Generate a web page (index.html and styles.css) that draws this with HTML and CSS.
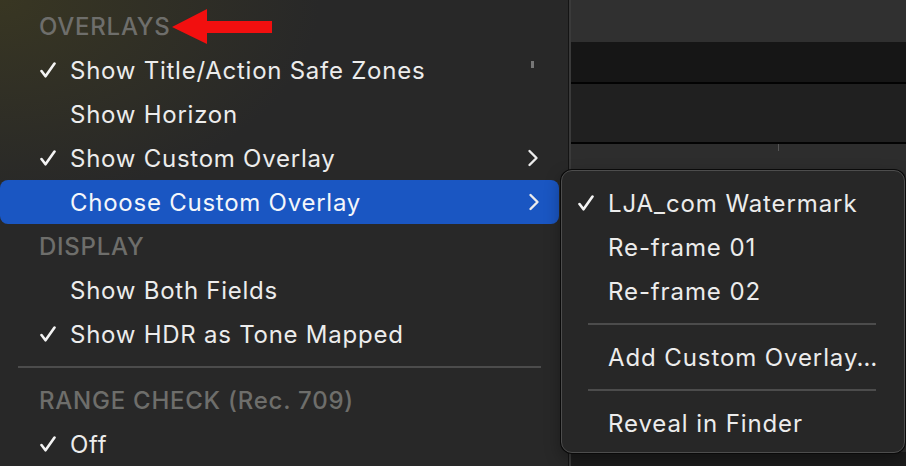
FILE: index.html
```html
<!DOCTYPE html>
<html>
<head>
<meta charset="utf-8">
<link rel="stylesheet" href="styles.css">
</head>
<body>
<div class="screen">
  <div class="menu">
    <div class="row header">OVERLAYS</div>
    <div class="row"><span class="check"><svg viewBox="0 0 16 16" width="16" height="16"><path d="M1.5 9 L5.5 14.3 L14.5 1.5" fill="none" stroke="currentColor" stroke-width="2.6" stroke-linecap="round" stroke-linejoin="round"/></svg></span><span class="label">Show Title/Action Safe Zones</span><span class="tick"></span></div>
    <div class="row"><span class="check"></span><span class="label">Show Horizon</span></div>
    <div class="row"><span class="check"><svg viewBox="0 0 16 16" width="16" height="16"><path d="M1.5 9 L5.5 14.3 L14.5 1.5" fill="none" stroke="currentColor" stroke-width="2.6" stroke-linecap="round" stroke-linejoin="round"/></svg></span><span class="label">Show Custom Overlay</span><span class="chev"><svg viewBox="0 0 12 18" width="12" height="18"><path d="M2.5 2 L9.5 9 L2.5 16" fill="none" stroke="currentColor" stroke-width="2.4" stroke-linecap="round" stroke-linejoin="round"/></svg></span></div>
    <div class="row selected"><span class="check"></span><span class="label">Choose Custom Overlay</span><span class="chev"><svg viewBox="0 0 12 18" width="12" height="18"><path d="M2.5 2 L9.5 9 L2.5 16" fill="none" stroke="currentColor" stroke-width="2.4" stroke-linecap="round" stroke-linejoin="round"/></svg></span></div>
    <div class="row header">DISPLAY</div>
    <div class="row"><span class="check"></span><span class="label">Show Both Fields</span></div>
    <div class="row"><span class="check"><svg viewBox="0 0 16 16" width="16" height="16"><path d="M1.5 9 L5.5 14.3 L14.5 1.5" fill="none" stroke="currentColor" stroke-width="2.6" stroke-linecap="round" stroke-linejoin="round"/></svg></span><span class="label">Show HDR as Tone Mapped</span></div>
    <div class="sep main-sep"></div>
    <div class="row header">RANGE CHECK (Rec. 709)</div>
    <div class="row"><span class="check"><svg viewBox="0 0 16 16" width="16" height="16"><path d="M1.5 9 L5.5 14.3 L14.5 1.5" fill="none" stroke="currentColor" stroke-width="2.6" stroke-linecap="round" stroke-linejoin="round"/></svg></span><span class="label">Off</span></div>
    <svg class="arrow" viewBox="0 0 100 35" width="100" height="35"><polygon points="0,18 35,0 35,12 100,12 100,24 35,24 35,35" fill="#f20f0f"/></svg>
  </div>
  <div class="app">
    <div class="band b1"></div>
    <div class="band b2"></div>
    <div class="band b3"></div>
    <div class="band b4"><span class="mark"></span></div>
    <div class="band b5"></div>
  </div>
  <div class="submenu">
    <div class="row"><span class="check"><svg viewBox="0 0 16 16" width="16" height="16"><path d="M1.5 9 L5.5 14.3 L14.5 1.5" fill="none" stroke="currentColor" stroke-width="2.6" stroke-linecap="round" stroke-linejoin="round"/></svg></span><span class="label">LJA_com Watermark</span></div>
    <div class="row"><span class="check"></span><span class="label">Re-frame 01</span></div>
    <div class="row"><span class="check"></span><span class="label">Re-frame 02</span></div>
    <div class="sep sub-sep"></div>
    <div class="row"><span class="check"></span><span class="label">Add Custom Overlay…</span></div>
    <div class="sep sub-sep"></div>
    <div class="row"><span class="check"></span><span class="label">Reveal in Finder</span></div>
  </div>
</div>
</body>
</html>
```

FILE: styles.css
```css
* { box-sizing: border-box; }
html, body { margin: 0; padding: 0; }
body {
  width: 906px;
  height: 466px;
  overflow: hidden;
  background: #282828;
  font-family: "Inter", "Liberation Sans", sans-serif;
}
.screen {
  position: relative;
  display: flex;
  width: 906px;
  height: 466px;
}
.menu {
  position: relative;
  width: 569px;
  flex: none;
  padding-top: 4px;
  background:
    radial-gradient(ellipse 320px 200px at 0 0, rgba(70, 66, 30, 0.55), rgba(40, 40, 40, 0) 100%),
    #282828;
  border-right: 1px solid #141414;
  color: #ececec;
}
.row {
  display: flex;
  align-items: center;
  height: 44px;
  font-size: 24px;
  letter-spacing: 0.75px;
  position: relative;
}
.menu .row { padding-left: 40px; padding-right: 29px; }
.header {
  color: #6e6e6b;
  padding-left: 39px !important;
  font-weight: 500;
  letter-spacing: 0.75px;
}
.check {
  width: 30px;
  flex: none;
  display: flex;
  align-items: center;
  color: #f4f4f4;
}
.check svg { display: block; }
.label { flex: 1; white-space: nowrap; }
.chev { display: flex; align-items: center; color: #ececec; }
.chev svg { display: block; }
.menu .selected {
  background: #1a56c2;
  border-radius: 8px;
  width: 559px;
  padding-right: 19px;
  color: #f4f6fb;
}
.tick {
  position: absolute;
  left: 531px;
  top: 13px;
  width: 3px;
  height: 7px;
  background: #777;
}
.sep { height: 22px; display: flex; align-items: center; }
.sep::after { content: ""; display: block; height: 2px; width: 100%; background: #4c4c4c; }
.main-sep { margin: 0 27px 0 18px; }
.arrow { position: absolute; left: 172px; top: 9px; }
.app {
  flex: 1;
  display: flex;
  flex-direction: column;
  border-left: 2px solid #3a3a3a;
  background: #2e2e2e;
}
.band { flex: none; position: relative; }
.b1 { height: 42px; background: #303030; }
.b2 { height: 42px; background: #161616; border-bottom: 2px solid #030303; }
.b3 { height: 60px; background: #202020; border-bottom: 2px solid #030303; }
.b4 { height: 308px; background: #2d2d2d; }
.b5 { flex: 1; background: #1c1c1c; }
.mark { position: absolute; left: 207px; top: 0; width: 1px; height: 7px; background: #555; }
.submenu {
  position: absolute;
  left: 561px;
  top: 170px;
  width: 344px;
  height: 283px;
  padding-top: 10px;
  background: #272727;
  border: 1px solid #4d4d4d;
  border-radius: 11px;
  box-shadow: 0 0 0 1px #0a0a0a, 0 6px 16px rgba(0, 0, 0, 0.35);
  color: #ececec;
}
.submenu .row { padding-left: 16px; letter-spacing: 0.9px; }
.sub-sep { margin: 0 28px 0 26px; }
```
